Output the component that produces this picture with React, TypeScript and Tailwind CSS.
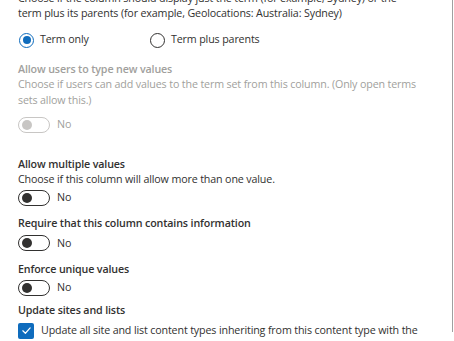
import React from "react";

function Toggle({ disabled }: { disabled?: boolean }) {
  return (
    <div className="flex items-center gap-[7px]">
      <div
        className={
          disabled
            ? "w-[32px] h-[16px] rounded-full border border-[#c8c6c4] flex items-center pl-[3px]"
            : "w-[32px] h-[16px] rounded-full border border-[#323130] flex items-center pl-[3px]"
        }
      >
        <div className={disabled ? "w-[10px] h-[10px] rounded-full bg-[#c8c6c4]" : "w-[10px] h-[10px] rounded-full bg-[#323130]"} />
      </div>
      <span className={disabled ? "text-[#a19f9d]" : "text-[#323130]"}>No</span>
    </div>
  );
}

export default function App() {
  return (
    <div className="w-[454px] h-[341px] overflow-hidden bg-white">
      <div className="w-[453px] h-[341px] border-r border-[#a0a0a0] pl-[18px] pr-[31px] font-['Open_Sans',sans-serif] text-[10.7px] tracking-[-0.14px] leading-[15.5px] text-[#323130]">
        <p className="mt-[-9.5px]">
          Choose if the column should display just the term (for example, Sydney) or the term plus its parents (for example, Geolocations: Australia: Sydney)
        </p>
        <div className="mt-[10.5px] flex items-center h-[16px]">
          <div className="flex items-center gap-[6px] w-[132px]">
            <div className="ml-[1px] w-[15px] h-[15px] rounded-full border border-[#0f6cbd] flex items-center justify-center">
              <div className="w-[8px] h-[8px] rounded-full bg-[#0f6cbd]" />
            </div>
            <span>Term only</span>
          </div>
          <div className="flex items-center gap-[6px]">
            <div className="w-[15px] h-[15px] rounded-full border border-[#323130]" />
            <span>Term plus parents</span>
          </div>
        </div>

        <div className="mt-[13.75px] text-[#a19f9d]">
          <div className="font-semibold">Allow users to type new values</div>
          <div>Choose if users can add values to the term set from this column. (Only open terms sets allow this.)</div>
        </div>
        <div className="mt-[8.25px]">
          <Toggle disabled />
        </div>

        <div className="mt-[24px]">
          <div className="font-semibold">Allow multiple values</div>
          <div>Choose if this column will allow more than one value.</div>
        </div>
        <div className="mt-[2.7px]">
          <Toggle />
        </div>

        <div className="mt-[10.3px] font-semibold">Require that this column contains information</div>
        <div className="mt-[3.5px]">
          <Toggle />
        </div>

        <div className="mt-[10.5px] font-semibold">Enforce unique values</div>
        <div className="mt-[2.7px]">
          <Toggle />
        </div>

        <div className="mt-[7.3px] font-semibold">Update sites and lists</div>
        <div className="mt-[4px] flex items-start gap-[7px]">
          <div className="mt-[0px] w-[16px] h-[16px] shrink-0 rounded-[2px] bg-[#0f6cbd] flex items-center justify-center">
            <svg width="11" height="11" viewBox="0 0 12 12" fill="none">
              <path d="M2 6.3 L4.8 9 L10 3.2" stroke="white" strokeWidth="1.3" strokeLinecap="round" strokeLinejoin="round" />
            </svg>
          </div>
          <span>Update all site and list content types inheriting from this content type with the column settings.</span>
        </div>
      </div>
    </div>
  );
}
